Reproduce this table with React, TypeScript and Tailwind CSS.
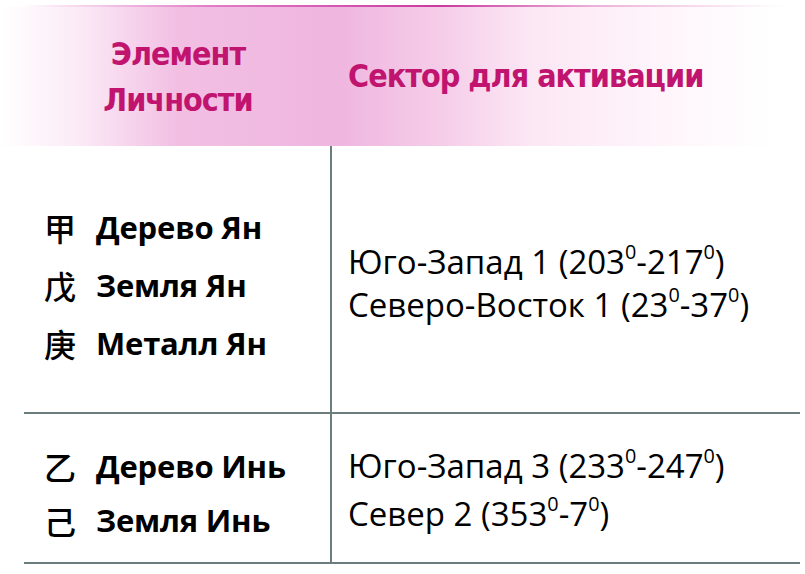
const rows1 = [
  { ch: "甲", text: "Дерево Ян" },
  { ch: "戊", text: "Земля Ян" },
  { ch: "庚", text: "Металл Ян" },
];

const rows2 = [
  { ch: "乙", text: "Дерево Инь" },
  { ch: "己", text: "Земля Инь" },
];

const Deg = ({ v }: { v: string }) => (
  <>
    {v}
    <sup className="text-[0.6em] -top-[0.75em] leading-none">0</sup>
  </>
);

const Element = ({ ch, text, lh }: { ch: string; text: string; lh: string }) => (
  <div className={`flex items-center ${lh}`}>
    <span className="w-[52px] text-[32px] font-medium text-black" style={{ fontFamily: "'Noto Sans CJK SC', sans-serif" }}>
      {ch}
    </span>
    <span className="text-[31px] font-bold text-black tracking-[-0.2px]">{text}</span>
  </div>
);

export default function App() {
  return (
    <div
      className="w-[805px] h-[574px] bg-white overflow-hidden pt-[5px]"
      style={{ fontFamily: "'Open Sans', 'Liberation Sans', sans-serif" }}
    >
      {/* header */}
      <div className="h-[2px] mx-[20px] bg-[linear-gradient(to_right,rgba(208,63,165,0)_0%,#e27bc7_25%,#c93a9e_55%,#ecb1d9_75%,rgba(240,190,225,0)_100%)]" />
      <div className="h-[139px] flex bg-[linear-gradient(to_right,#ffffff_0%,#fbeaf6_10%,#f2bfe3_22%,#efb6e0_42%,#f5cbe8_54%,#fce7f4_66%,#fef3fa_80%,#ffffff_96%)]">
        <div
          className="w-[332px] pl-[24px] flex flex-col items-center justify-center text-[32px] font-bold leading-[46px] text-[#c0146f]"
          style={{ fontFamily: "'DejaVu Sans Condensed', 'Liberation Sans', sans-serif" }}
        >
          <div className="tracking-[-1px]">Элемент</div>
          <div className="tracking-[-1px]">Личности</div>
        </div>
        <div
          className="flex-1 flex items-center pl-[16px] pb-[2px] text-[32px] font-bold text-[#c0146f] tracking-[-1px]"
          style={{ fontFamily: "'DejaVu Sans Condensed', 'Liberation Sans', sans-serif" }}
        >
          Сектор для активации
        </div>
      </div>

      {/* row 1 */}
      <div className="flex ml-[24px] mr-[5px] h-[268px] border-b-2 border-[#6b7e7d]">
        <div className="w-[308px] border-r-2 border-[#6b7e7d] pl-[20px] pt-[52px]">
          {rows1.map((r) => (
            <Element key={r.ch} ch={r.ch} text={r.text} lh="h-[58px]" />
          ))}
        </div>
        <div className="flex-1 pl-[16px] pt-[94px] text-[33px] leading-[43px] text-black">
          <div>
            Юго-Запад 1 (<Deg v="203" />-<Deg v="217" />)
          </div>
          <div>
            Северо-Восток 1 (<Deg v="23" />-<Deg v="37" />)
          </div>
        </div>
      </div>

      {/* row 2 */}
      <div className="flex ml-[24px] mr-[5px] h-[150px] border-b-2 border-[#6b7e7d]">
        <div className="w-[308px] border-r-2 border-[#6b7e7d] pl-[20px] pt-[25px]">
          {rows2.map((r) => (
            <Element key={r.ch} ch={r.ch} text={r.text} lh="h-[54px]" />
          ))}
        </div>
        <div className="flex-1 pl-[16px] pt-[28px] text-[33px] leading-[48px] text-black">
          <div>
            Юго-Запад 3 (<Deg v="233" />-<Deg v="247" />)
          </div>
          <div>
            Север 2 (<Deg v="353" />-<Deg v="7" />)
          </div>
        </div>
      </div>
    </div>
  );
}
